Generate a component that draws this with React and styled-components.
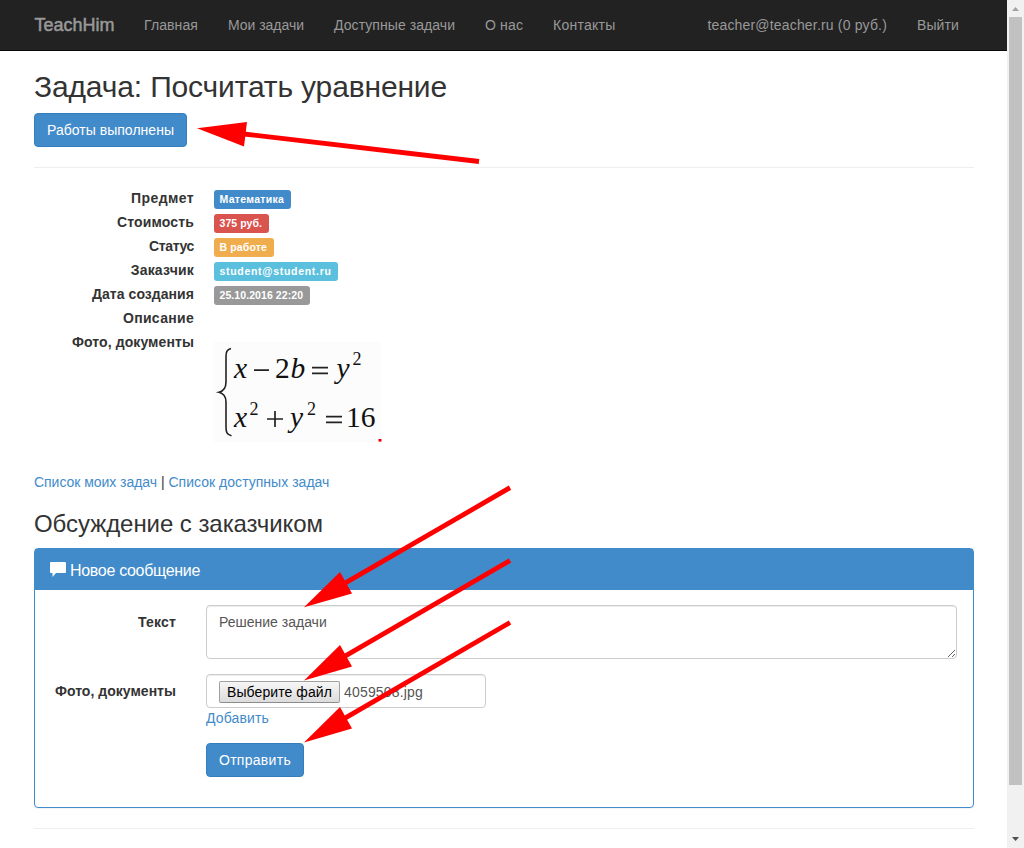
import React from 'react';
import styled, { createGlobalStyle } from 'styled-components';

const GlobalStyle = createGlobalStyle`
  *, *::before, *::after { box-sizing: border-box; }
  html, body { margin: 0; padding: 0; overflow: hidden; }
  body {
    font-family: "Liberation Sans", Arial, Helvetica, sans-serif;
    font-size: 14px;
    line-height: 20px;
    color: #333;
    background: #fff;
  }
`;

const Window = styled.div`
  position: relative;
  display: flex;
  width: 1024px;
  height: 848px;
  overflow: hidden;
`;

const Page = styled.div`
  flex: 1;
  min-width: 0;
`;

const Navbar = styled.nav`
  display: flex;
  height: 51px;
  padding: 0 33px 0 34px;
  background: #222;
  border-bottom: 1px solid #080808;
`;

const Brand = styled.a`
  width: 95px;
  padding: 15px 0 15px 0.5px;
  font-size: 18px;
  color: #999;
  -webkit-text-stroke: 0.5px #999;
`;

const NavLink = styled.a`
  padding: 15px;
  color: #999;
  white-space: nowrap;
  letter-spacing: ${(p) => p.$track || 0}px;
`;

const NavRight = styled.div`
  display: flex;
  margin-left: auto;
`;

const Container = styled.main`
  width: 940px;
  margin: 19px 0 0 34px;
`;

const Title = styled.h2`
  margin: 0 0 10px;
  font-size: 30px;
  line-height: 33px;
  font-weight: 400;
  letter-spacing: -0.147px;
`;

const Subtitle = styled.h3`
  margin: 19px 0 11px;
  font-size: 24px;
  line-height: 26px;
  font-weight: 400;
  letter-spacing: -0.059px;
`;

const Button = styled.button`
  display: block;
  width: ${(p) => p.$width}px;
  height: 34px;
  padding: 6px 0;
  border: 1px solid #357ebd;
  border-radius: 4px;
  background: #428bca;
  color: #fff;
  font: inherit;
  text-align: center;
  white-space: nowrap;
  letter-spacing: ${(p) => p.$track || 0}px;
`;

const Divider = styled.hr`
  height: 1px;
  margin: 20px 0;
  border: 0;
  background: #eee;
`;

const Details = styled.dl`
  display: grid;
  grid-template-columns: 160px 1fr;
  column-gap: 20px;
  grid-auto-rows: 20px;
  row-gap: 4px;
  height: 264px;
  margin: 0 0 20px;
`;

const Term = styled.dt`
  font-weight: 700;
  text-align: right;
  white-space: nowrap;
  letter-spacing: ${(p) => p.$track || 0}px;
`;

const Value = styled.dd`
  display: flex;
  margin: 0;
`;

const Badge = styled.span`
  width: ${(p) => p.$width}px;
  height: 19px;
  margin-top: 2px;
  padding-left: 5.5px;
  border-radius: 3px;
  background: ${(p) => p.$color};
  color: #fff;
  font-size: 10.5px;
  line-height: 19px;
  font-weight: 700;
  white-space: nowrap;
  letter-spacing: ${(p) => p.$track || 0}px;
`;

const Formula = styled.svg`
  flex: none;
  width: 168px;
  height: 100px;
  margin-top: 10px;
  font-family: "Liberation Serif", "Times New Roman", serif;
  font-size: 29.5px;
  fill: #111;
`;

const Links = styled.div`
  height: 20px;
`;

const Link = styled.a`
  color: #428bca;
  letter-spacing: ${(p) => p.$track || 0}px;
`;

const Panel = styled.section`
  height: 260px;
  border: 1px solid #428bca;
  border-radius: 4px;
  box-shadow: 0 1px 1px rgba(0, 0, 0, 0.05);
`;

const PanelHeading = styled.header`
  display: flex;
  align-items: center;
  gap: 4px;
  height: 41px;
  padding: 2px 15px 0;
  background: #428bca;
  color: #fff;
  font-size: 16px;
  letter-spacing: -0.314px;
`;

const CommentIcon = styled.svg`
  width: 16px;
  height: 16px;
  margin-bottom: 2px;
  fill: #fff;
`;

const PanelBody = styled.form`
  display: grid;
  grid-template-columns: 126px 751px;
  column-gap: 30px;
  row-gap: 15px;
  padding: 15px;
`;

const Label = styled.label`
  padding-top: 7px;
  font-weight: 700;
  text-align: right;
  white-space: nowrap;
  letter-spacing: ${(p) => p.$track || 0}px;
`;

const TextArea = styled.textarea`
  display: block;
  width: 100%;
  height: 54px;
  padding: 6px 12px;
  border: 1px solid #ccc;
  border-radius: 4px;
  box-shadow: inset 0 1px 1px rgba(0, 0, 0, 0.075);
  color: #555;
  font: inherit;
  outline: 0;
`;

const FileInput = styled.div`
  display: flex;
  align-items: center;
  gap: 4px;
  width: 280px;
  height: 34px;
  padding: 2px 12px 0;
  border: 1px solid #ccc;
  border-radius: 4px;
  box-shadow: inset 0 1px 1px rgba(0, 0, 0, 0.075);
  color: #555;
  letter-spacing: 0.175px;
`;

const FileButton = styled.button`
  width: 121px;
  height: 22px;
  padding: 0;
  border: 1px solid #a0a0a0;
  border-bottom-color: #8c8c8c;
  border-radius: 2px;
  background: linear-gradient(#f6f6f6, #dcdcdc);
  color: #000;
  font: inherit;
  line-height: 20px;
  white-space: nowrap;
  letter-spacing: 0.086px;
`;

const SubmitCell = styled.div`
  grid-column: 2;
`;

const Scrollbar = styled.aside`
  display: flex;
  flex-direction: column;
  align-items: center;
  flex: none;
  width: 17px;
  background: #f1f1f1;
`;

const ScrollThumb = styled.div`
  width: 13px;
  height: 768px;
  margin-bottom: auto;
  background: #c1c1c1;
`;

const ScrollArrow = styled.svg`
  display: block;
  width: 17px;
  height: 17px;
  fill: ${(p) => p.$fill};
`;

const Annotations = styled.svg`
  position: absolute;
  inset: 0;
  width: 1024px;
  height: 848px;
  pointer-events: none;
`;

const NAV = [
  ['Главная', 0.102],
  ['Мои задачи', -0.028],
  ['Доступные задачи', 0.062],
  ['О нас', 0.141],
  ['Контакты', 0.254],
];

const DETAILS = [
  { term: 'Предмет', track: 0.414, value: 'Математика', color: '#428bca', width: 77, valueTrack: 0.3 },
  { term: 'Стоимость', track: 0.141, value: '375 руб.', color: '#d9534f', width: 55, valueTrack: 0.056 },
  { term: 'Статус', track: -0.364, value: 'В работе', color: '#f0ad4e', width: 60, valueTrack: 0.128 },
  { term: 'Заказчик', track: 0.2, value: 'student@student.ru', color: '#5bc0de', width: 124, valueTrack: 0.7 },
  { term: 'Дата создания', track: 0.053, value: '25.10.2016 22:20', color: '#999', width: 96, valueTrack: 0.08 },
  { term: 'Описание', track: 0.307 },
];

const ARROWS = [
  { head: '197,128.3 247,122 244,146.5', from: [244, 134], to: [479, 161.5] },
  { head: '304,607.3 340,572 352,593.5', from: [345, 583.2], to: [510, 487.7] },
  { head: '304,680.5 340,645 352,666.5', from: [345, 656.2], to: [510, 560.5] },
  { head: '304,742.6 340,707 352,728.5', from: [345, 718.2], to: [510, 622.5] },
];

function Equation() {
  return (
    <Formula viewBox="0 0 168 100">
      <rect width="167" height="100" fill="#fcfcfc" />
      <path
        d="M17 6.5C12.6 7.6 12 10.5 12 15V40C12 46 10 49 5 50.3C10 51.6 12 54.5 12 60V85C12 90 12.8 92.6 17.5 93.7"
        fill="none"
        stroke="#222"
        strokeWidth="1.6"
      />
      <text x="20" y="35.5" fontStyle="italic">x</text>
      <path d="M40 28.2H55M98 25.6H114M98 31.4H114M53 77H69M61 69V85M112 74.6H128M112 80.4H128" stroke="#222" strokeWidth="1.7" />
      <text x="61" y="35.5">2</text>
      <text x="76.5" y="35.5" fontStyle="italic">b</text>
      <text x="122.5" y="35.5" fontStyle="italic">y</text>
      <text x="138.5" y="23" fontSize="18">2</text>
      <text x="20" y="84.5" fontStyle="italic">x</text>
      <text x="35.5" y="72.5" fontSize="18">2</text>
      <text x="76" y="84.5" fontStyle="italic">y</text>
      <text x="93" y="72.5" fontSize="18">2</text>
      <text x="132" y="84.5">16</text>
      <rect x="164.5" y="97" width="3" height="2.6" fill="#e00" />
    </Formula>
  );
}

export default function App() {
  return (
    <>
      <GlobalStyle />
      <Window>
        <Page>
          <Navbar>
            <Brand>TeachHim</Brand>
            {NAV.map(([label, track]) => (
              <NavLink key={label} $track={track}>{label}</NavLink>
            ))}
            <NavRight>
              <NavLink $track={0.18}>teacher@teacher.ru (0 руб.)</NavLink>
              <NavLink $track={0.109}>Выйти</NavLink>
            </NavRight>
          </Navbar>
          <Container>
            <Title>Задача: Посчитать уравнение</Title>
            <Button $width={153} $track={0.027}>Работы выполнены</Button>
            <Divider />
            <Details>
              {DETAILS.map((d) => (
                <React.Fragment key={d.term}>
                  <Term $track={d.track}>{d.term}</Term>
                  <Value>
                    {d.value && (
                      <Badge $color={d.color} $width={d.width} $track={d.valueTrack}>{d.value}</Badge>
                    )}
                  </Value>
                </React.Fragment>
              ))}
              <Term $track={0.092}>Фото, документы</Term>
              <Value><Equation /></Value>
            </Details>
            <Links>
              <Link $track={-0.043}>Список моих задач</Link> | <Link $track={0.027}>Список доступных задач</Link>
            </Links>
            <Subtitle>Обсуждение с заказчиком</Subtitle>
            <Panel>
              <PanelHeading>
                <CommentIcon viewBox="0 0 16 16">
                  <path d="M1 0H15Q16 0 16 1V10Q16 11 15 11H6L2.5 15V11H1Q0 11 0 10V1Q0 0 1 0Z" />
                </CommentIcon>
                Новое сообщение
              </PanelHeading>
              <PanelBody>
                <Label $track={0.179}>Текст</Label>
                <TextArea defaultValue="Решение задачи" />
                <Label $track={0.03}>Фото, документы</Label>
                <div>
                  <FileInput>
                    <FileButton type="button">Выберите файл</FileButton>
                    4059508.jpg
                  </FileInput>
                  <Link $track={0.141}>Добавить</Link>
                </div>
                <SubmitCell>
                  <Button type="button" $width={98} $track={0.287}>Отправить</Button>
                </SubmitCell>
              </PanelBody>
            </Panel>
            <Divider />
          </Container>
        </Page>
        <Scrollbar>
          <ScrollArrow viewBox="0 0 17 17" $fill="#a3a3a3"><path d="M5 11L8.5 7L12 11Z" /></ScrollArrow>
          <ScrollThumb />
          <ScrollArrow viewBox="0 0 17 17" $fill="#505050"><path d="M5 6L8.5 10L12 6Z" /></ScrollArrow>
        </Scrollbar>
        <Annotations viewBox="0 0 1024 848">
          {ARROWS.map((a) => (
            <g key={a.head} fill="#f00" stroke="#f00">
              <polygon points={a.head} stroke="none" />
              <line x1={a.from[0]} y1={a.from[1]} x2={a.to[0]} y2={a.to[1]} strokeWidth="4.8" />
            </g>
          ))}
        </Annotations>
      </Window>
    </>
  );
}
